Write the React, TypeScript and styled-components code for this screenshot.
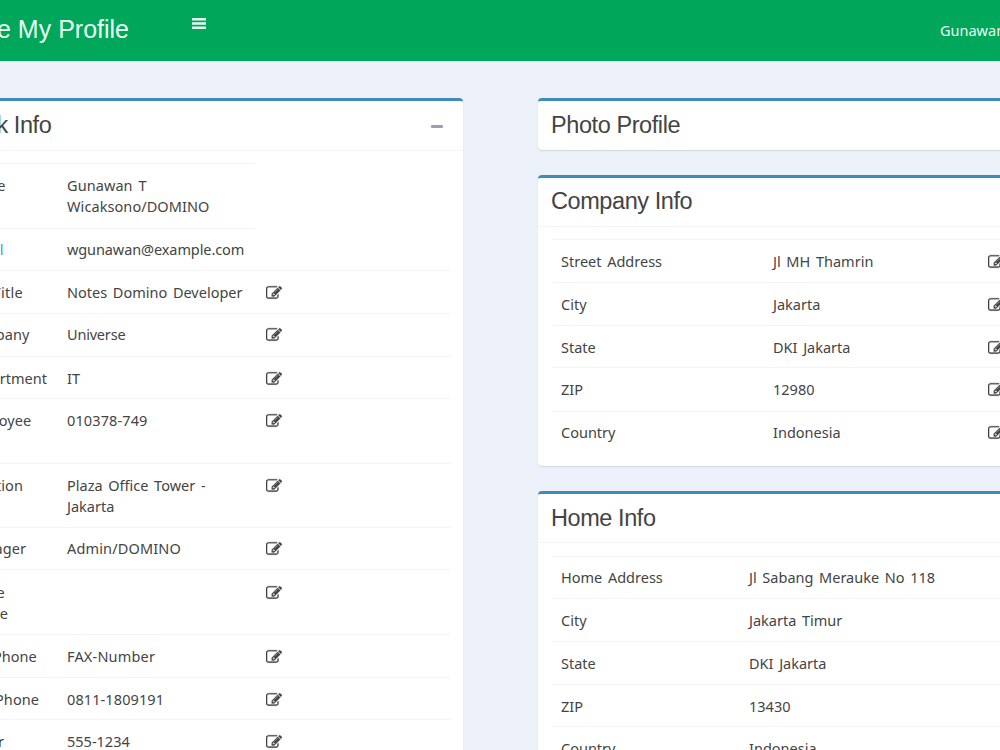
import React from "react";
import styled, { createGlobalStyle } from "styled-components";

const GlobalStyle = createGlobalStyle`
  * { box-sizing: border-box; }
  html, body { margin: 0; padding: 0; height: 750px; overflow: hidden; background: #ecf0f8; }
  body { font-family: "Noto Sans", "Open Sans", sans-serif; color: #444; }
`;

const Page = styled.div`
  width: 1061px;
  height: 750px;
  margin-left: -60px;
  overflow: hidden;
  background: #ecf0f8;
`;

const Header = styled.header`
  display: flex;
  height: 61px;
  background: #00a65a;
  color: #e6fff2;
`;

const Brand = styled.div`
  width: 189px;
  flex: none;
  display: flex;
  justify-content: flex-end;
  font: 25px/58px "Liberation Sans", Arial, sans-serif;
  white-space: nowrap;
`;

const MenuButton = styled.div`
  padding: 18px 0 0 63px;
  flex: 1;
  svg { display: block; }
`;

const UserName = styled.div`
  width: 61px;
  font-size: 14.5px;
  line-height: 61px;
  white-space: nowrap;
`;

const Content = styled.main`
  display: flex;
  gap: 75px;
  padding: 37px 0 0 1px;
`;

const Column = styled.div`
  display: flex;
  flex-direction: column;
  gap: 25px;
  width: 522px;
  flex: none;
`;

const Panel = styled.section`
  border-top: 3px solid #3f8cb8;
  border-radius: 4px;
  background: #fff;
  box-shadow: 0 1px 1px rgba(0, 0, 0, 0.12);
`;

const PanelHeader = styled.div<{ $height?: number; $line?: boolean; $left?: number }>`
  display: flex;
  justify-content: space-between;
  height: ${(p) => p.$height || 49}px;
  padding: 0 20px 0 ${(p) => p.$left || 13}px;
  border-bottom: ${(p) => (p.$line ? "1px solid #f4f4f4" : "none")};
`;

const Title = styled.h3<{ $lineHeight?: number }>`
  margin: 0;
  font: 400 23.5px/${(p) => p.$lineHeight || 49}px "Liberation Sans", Arial, sans-serif;
  letter-spacing: -0.42px;
  white-space: nowrap;
`;

const Collapse = styled.span`
  align-self: flex-start;
  width: 12px;
  height: 3px;
  margin-top: 24px;
  border-radius: 1px;
  background: #97a0b3;
`;

const Table = styled.div<{ $top: number }>`
  padding: ${(p) => p.$top}px 13px 12px;
`;

const Row = styled.div<{ $height: number; $cols: string; $short?: boolean }>`
  display: grid;
  grid-template-columns: ${(p) => p.$cols};
  height: ${(p) => p.$height}px;
  width: ${(p) => (p.$short ? "301px" : "100%")};
  border-top: 1px solid #f4f4f4;
`;

const Cell = styled.div<{ $tint?: string; $top?: number; $tracking?: number }>`
  padding: ${(p) => p.$top ?? 11}px 0 0 10px;
  font-size: 14.5px;
  line-height: 21.4px;
  letter-spacing: ${(p) => p.$tracking || 0}px;
  word-spacing: 1.9px;
  white-space: pre;
  color: ${(p) => p.$tint || "inherit"};
  svg { display: block; margin-top: 3px; }
`;

const EditIcon = () => (
  <svg width="16" height="16" viewBox="0 0 1792 1792" fill="#444" stroke="#444" strokeWidth="30">
    <path d="M888 1184l116-116-152-152-116 116v56h96v96h56zm440-720q-16-16-33 1l-350 350q-17 17-1 33t33-1l350-350q17-17 1-33zm80 594v190q0 119-84.5 203.5t-203.5 84.5h-832q-119 0-203.5-84.5t-84.5-203.5v-832q0-119 84.5-203.5t203.5-84.5h832q63 0 117 25 15 7 18 23 3 17-9 29l-49 49q-14 14-32 8-23-6-45-6h-832q-66 0-113 47t-47 113v832q0 66 47 113t113 47h832q66 0 113-47t47-113v-126q0-13 9-22l64-64q15-15 35-7t20 29zm-96-738l288 288-672 672h-288v-288zm444 132l-92 92-288-288 92-92q28-28 68-28t68 28l152 152q28 28 28 68t-28 68z" />
  </svg>
);

type Item = {
  label: string;
  value: string;
  height: number;
  short?: boolean;
  edit?: boolean;
  tint?: string;
  top?: number;
  tracking?: number;
  labelTracking?: number;
};

const work: Item[] = [
  { label: "Name", value: "Gunawan T\nWicaksono/DOMINO", height: 65, short: true, tracking: 0.08, labelTracking: 0.2 },
  { label: "Email", value: "wgunawan@example.com", height: 42, short: true, tint: "#3c9fd8", top: 10, tracking: -0.1, labelTracking: 0.55 },
  { label: "Job Title", value: "Notes Domino Developer", height: 43, edit: true, labelTracking: 0.3 },
  { label: "Company", value: "Universe", height: 43, edit: true, top: 10, tracking: -0.2, labelTracking: 0.1 },
  { label: "Department", value: "IT", height: 42, edit: true },
  { label: "Employee\nID", value: "010378-749", height: 65, edit: true, tracking: 0.12, labelTracking: 0.1 },
  { label: "Location", value: "Plaza Office Tower -\nJakarta", height: 64, edit: true, labelTracking: 0.1 },
  { label: "Manager", value: "Admin/DOMINO", height: 42, edit: true, top: 10, tracking: 0.15, labelTracking: 0.1 },
  { label: "Office\nPhone", value: "", height: 65, edit: true, top: 12, labelTracking: 0.1 },
  { label: "Fax Phone", value: "FAX-Number", height: 43, edit: true, tracking: 0.18 },
  { label: "Cell Phone", value: "0811-1809191", height: 42, edit: true, tracking: 0.1, labelTracking: 0.1 },
  { label: "Pager", value: "555-1234", height: 43, edit: true },
];

const company: Item[] = [
  { label: "Street Address", value: "Jl MH Thamrin", height: 43, edit: true },
  { label: "City", value: "Jakarta", height: 43, edit: true },
  { label: "State", value: "DKI Jakarta", height: 42, edit: true },
  { label: "ZIP", value: "12980", height: 44, edit: true },
  { label: "Country", value: "Indonesia", height: 43, edit: true, top: 10 },
];

const home: Item[] = [
  { label: "Home Address", value: "Jl Sabang Merauke No 118", height: 42, top: 10 },
  { label: "City", value: "Jakarta Timur", height: 43 },
  { label: "State", value: "DKI Jakarta", height: 43 },
  { label: "ZIP", value: "13430", height: 42 },
  { label: "Country", value: "Indonesia", height: 43 },
];

const InfoTable = ({ items, cols, top = 12 }: { items: Item[]; cols: string; top?: number }) => (
  <Table $top={top}>
    {items.map((item) => (
      <Row key={item.label} $height={item.height} $cols={cols} $short={item.short}>
        <Cell $tint={item.tint} $top={item.top} $tracking={item.labelTracking}>{item.label}</Cell>
        <Cell $top={item.top} $tracking={item.tracking}>{item.value}</Cell>
        {item.edit && <Cell $top={item.top}><EditIcon /></Cell>}
      </Row>
    ))}
  </Table>
);

export default function App() {
  return (
    <>
      <GlobalStyle />
      <Page>
        <Header>
          <Brand>Update My Profile</Brand>
          <MenuButton>
            <svg width="14" height="11" viewBox="0 0 14 11" fill="#e6fff2">
              <path d="M0 0h14v2.4H0zM0 4.3h14v2.4H0zM0 8.6h14v2.4H0z" />
            </svg>
          </MenuButton>
          <UserName>Gunawan T</UserName>
        </Header>
        <Content>
          <Column>
            <Panel>
              <PanelHeader $line $height={50} $left={14}>
                <Title>Work Info</Title>
                <Collapse />
              </PanelHeader>
              <InfoTable items={work} cols="103px 199px 1fr" />
            </Panel>
          </Column>
          <Column>
            <Panel>
              <PanelHeader>
                <Title>Photo Profile</Title>
              </PanelHeader>
            </Panel>
            <Panel>
              <PanelHeader $line>
                <Title $lineHeight={47}>Company Info</Title>
              </PanelHeader>
              <InfoTable items={company} cols="212px 215px 1fr" />
            </Panel>
            <Panel>
              <PanelHeader $line>
                <Title>Home Info</Title>
              </PanelHeader>
              <InfoTable items={home} cols="188px 1fr" top={13} />
            </Panel>
          </Column>
        </Content>
      </Page>
    </>
  );
}
